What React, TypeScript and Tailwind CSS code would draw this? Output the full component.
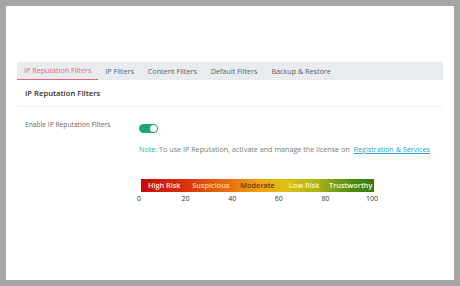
import React from "react";

export default function App() {
  const tabs = ["IP Reputation Filters", "IP Filters", "Content Filters", "Default Filters", "Backup & Restore"];
  const scale = [0, 20, 40, 60, 80, 100];
  return (
    <div className="w-[460px] h-[286px] bg-[#a6a6a6] p-[6px]" style={{ fontFamily: '"Open Sans", sans-serif' }}>
      <div className="w-full h-full bg-white px-[11px] pt-[56px]">
        <div className="flex h-[18px] bg-[#e8ecef] items-stretch">
          {tabs.map((t, i) => (
            <div
              key={t}
              className={
                i === 0
                  ? "flex items-center px-[7px] text-[7.2px] text-[#e0677a] border-b-[1.5px] border-[#e0677a]"
                  : "flex items-center px-[7px] text-[7.2px] text-[#5a5f66]"
              }
            >
              {t}
            </div>
          ))}
        </div>
        <div className="h-[27px] flex items-center pt-[2px] px-[8px] text-[7.7px] font-semibold text-[#333] border-b border-[#eef0f2]">
          IP Reputation Filters
        </div>
        <div className="flex pl-[8px] pt-[13px]">
          <div className="w-[114px] text-[6.7px] text-[#666] leading-[10px]">Enable IP Reputation Filters</div>
          <div className="flex flex-col">
            <div className="mt-[4px] w-[19px] h-[9px] rounded-full bg-[#1aa877] flex items-center justify-end pr-[1px]">
              <div className="w-[7px] h-[7px] rounded-full bg-white" />
            </div>
            <div className="mt-[11px] text-[7.2px] text-[#7a7a7a] leading-[10px] whitespace-nowrap">
              <span className="text-[#2bb28a]">Note:</span> To use IP Reputation, activate and manage the license on{" "}
              <span className="ml-[2px] text-[#2a9fd8] underline">Registration &amp; Services</span>
            </div>
            <div className="mt-[25px] ml-[2px] w-[233px] h-[13px] grid grid-cols-5 items-center text-center text-[7.3px] font-semibold bg-[linear-gradient(to_right,#c80a0a_0%,#d8300a_18%,#ea7010_38%,#f0a010_50%,#e0c010_62%,#a8b416_76%,#4f8c12_90%,#3a780c_100%)]">
              <span className="text-[#ffe8e0]">High Risk</span>
              <span className="text-[#ffd8a0]">Suspicious</span>
              <span className="text-[#6a3a10]">Moderate</span>
              <span className="text-[#fff4c0]">Low Risk</span>
              <span className="text-[#f0ffe0]">Trustworthy</span>
            </div>
            <div className="relative h-[14px] w-[240px]">
              {scale.map((n, i) => (
                <span
                  key={n}
                  className="absolute top-[2px] text-[7px] text-[#333] -translate-x-1/2"
                  style={{ left: `${i * 46.6}px` }}
                >
                  {n}
                </span>
              ))}
            </div>
          </div>
        </div>
      </div>
    </div>
  );
}
